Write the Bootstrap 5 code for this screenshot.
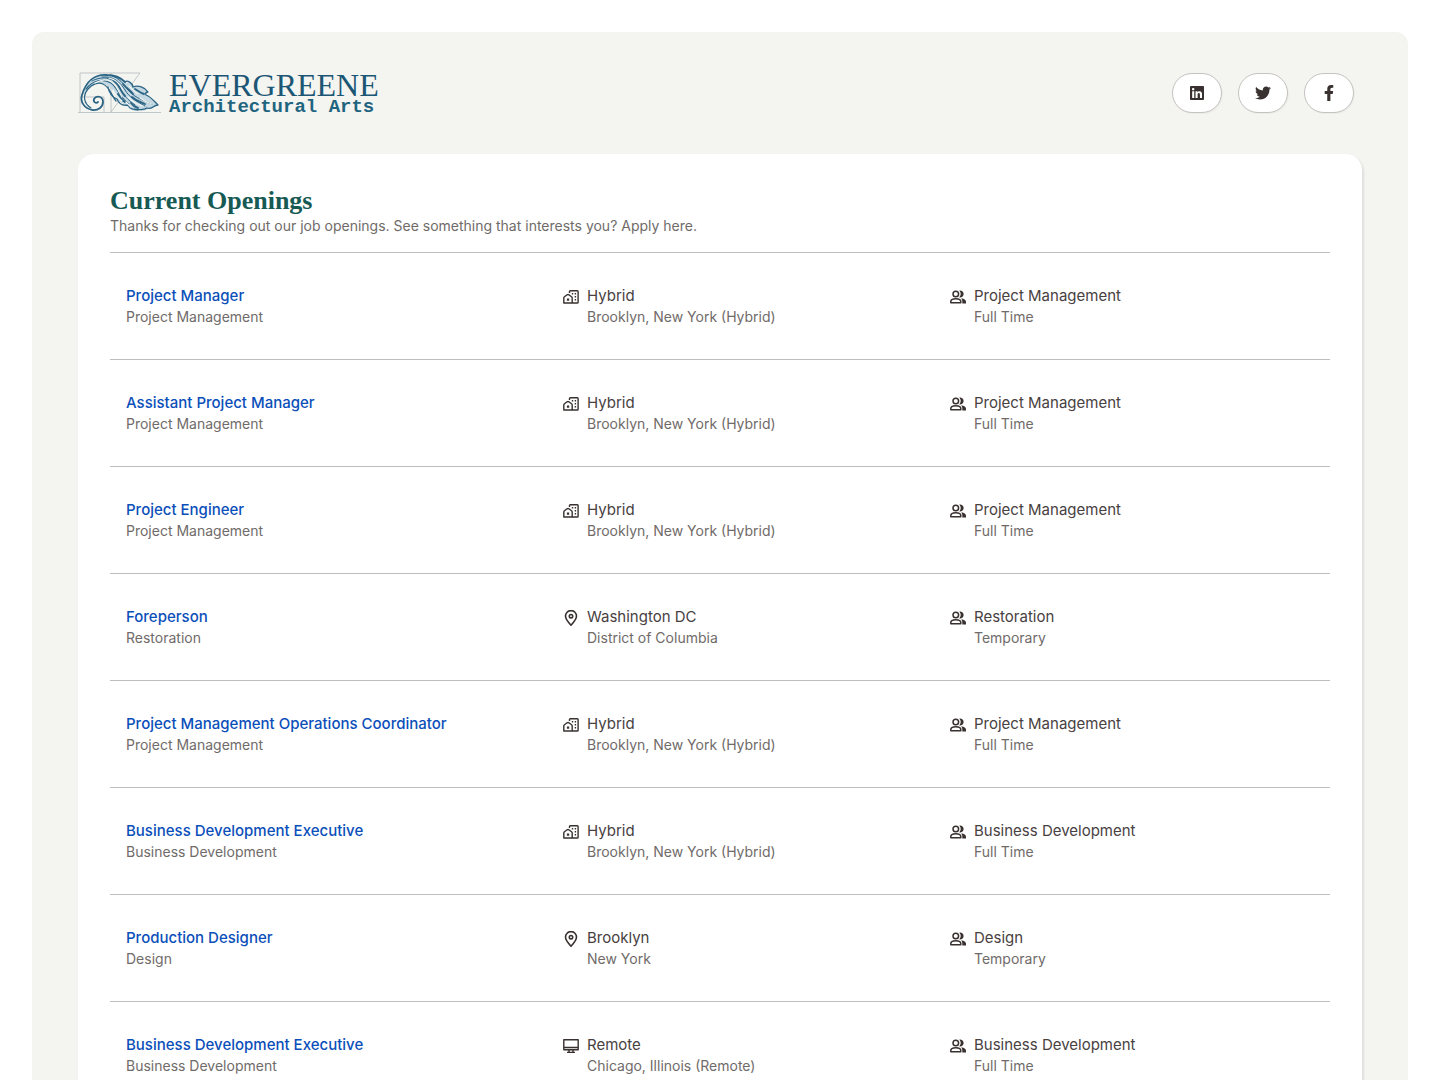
<!DOCTYPE html>
<html lang="en">
<head>
<meta charset="utf-8">
<meta name="viewport" content="width=device-width, initial-scale=1">
<title>Current Openings</title>
<link href="https://cdn.jsdelivr.net/npm/bootstrap@5.3.0/dist/css/bootstrap.min.css" rel="stylesheet">
<style>
body { font-family: Inter, sans-serif; font-size: 14px; line-height: 20px; color: #706b69; background: #fff; }
.shell { background: #f4f4f0; border-radius: 12px; padding: 40px 46px; margin: 32px; }
.brand { height: 42px; color: #1c5675; gap: 7px; }
.brand:hover { color: #1c5675; }
.brand-name { font: 32px/26px "Liberation Serif", serif; }
.brand-tag { font: bold 19px/18px "Liberation Mono", monospace; color: #1f6580; }
.social { width: 50px; height: 40px; background: #fff; border: 1px solid #c6c2bf; color: #38312f; box-shadow: 1px 1px 0 rgba(56,49,47,.04); }
.panel { background: #fff; border-radius: 16px; padding: 32px; margin-top: 40px; box-shadow: 2px 2px 2px rgba(56,49,47,.1); }
.panel-title { font: bold 26px/30px "Liberation Serif", serif; color: #165a53; }
.opening { display: grid; grid-template-columns: 437fr 387fr 364fr; padding: 32px 16px; border-top: 1px solid #c0bebc; }
.line-main { font-size: 15px; line-height: 22px; color: #48413f; }
a.line-main { color: #0b4fba; font-weight: 500; text-decoration: none; }
.glyph { width: 16px; height: 16px; margin: 4px 8px 0 0; flex: none; color: #38312f; }
</style>
<script src="https://cdn.jsdelivr.net/npm/bootstrap@5.3.0/dist/js/bootstrap.bundle.min.js"></script>
</head>
<body>
<svg class="d-none" aria-hidden="true">
  <symbol id="hybrid" viewBox="0 0 16 16"><path fill="none" stroke="currentColor" stroke-width="1.400" stroke-linejoin="round" d="M.8 14V9c0-.6.3-1 .7-1.300l2.600-1.900c.6-.4 1.200-.4 1.800 0l2.600 1.900c.4.3.7.7.7 1.300v5zM6.500 4V2.500c0-.5.3-.8.8-.8h7c.5 0 .8.3.8.8v10.700c0 .5-.3.8-.8.8H9.300"/><path fill="currentColor" d="M3.900 9.400h2.300v2.300H3.900zM8.800 4h1.400v1.500H8.800zM11.700 4h1.400v1.500h-1.400zM11.700 7h1.400v1.500h-1.400zM11.700 10h1.400v1.500h-1.400z"/></symbol>
  <symbol id="pin" viewBox="0 0 16 16"><g fill="none" stroke="currentColor" stroke-width="1.600"><path d="M8 15.200C5.200 12.300 2.500 9.400 2.500 6.100a5.500 5.500 0 0 1 11 0c0 3.300-2.700 6.200-5.500 9.100z"/><circle cx="8" cy="6.200" r="1.700"/></g></symbol>
  <symbol id="remote" viewBox="0 0 16 16"><path fill="none" stroke="currentColor" stroke-width="1.400" stroke-linejoin="round" d="M.8 1.800h14.400v10H.8zM.8 9.500h14.400M6 12v2.300M10 12v2.300M4 14.400h8"/></symbol>
  <symbol id="people" viewBox="0 0 16 16"><g fill="none" stroke="currentColor" stroke-width="1.500"><circle cx="5.800" cy="5" r="2.800"/><path stroke-linejoin="round" d="M.8 13.700v-1.200c0-2 2-2.800 5-2.800s5 .8 5 2.800v1.200z"/></g><path fill="currentColor" d="M9.300 1.600a3.500 3.500 0 1 1 0 6.800 5.200 5.200 0 0 0 0-6.800zM11.200 9.200c3 .3 4.800 1.500 4.800 3.600v1.700h-3.700v-2c0-1.400-.4-2.400-1.100-3.300z"/></symbol>
</svg>
<main class="shell">
  <header class="d-flex justify-content-between align-items-center">
    <a href="#" class="brand d-flex text-decoration-none">
      <svg width="84" height="42" viewBox="0 0 84 42" fill="none" aria-hidden="true">
        <path stroke="#a9b3b8" stroke-width=".7" d="M2 40V1h60L33 40M33 1v39M2 25h24v15M0 40.500h83"/>
        <path fill="#c3d8e2" d="M5 22C8 9 17 2 29 3c9 0 15 3 19 8 4-2 7 0 8 4 6-2 11 0 14 5l-2 3c4 2 8 6 12 10-5 1-4 5-10 4-5 3-9 1-13 1-4 1-7-2-9-5-6-2-10-7-12-13-4-5-8-9-15-8-7 0-11 4-14 9z"/>
        <g stroke="#2c6484" stroke-linecap="round" stroke-linejoin="round">
          <path stroke-width="1.800" d="M20 30c-2 2-5 0-4-3 2-4 9-3 9 3 0 5-5 9-11 8C6 36 2 30 4 23 8 9 17 2 29 3c8 0 14 3 18 7"/>
          <path stroke-width="1.200" d="M13 36C5 31 5 23 10 17c4-5 10-7 15-5 7 3 8 11 13 17M8 17c7-9 17-11 25-6 7 5 8 14 18 21"/>
          <path stroke-width="1" d="M14 9c11-6 23-3 28 7 3 7 8 12 15 17M24 5c12-1 18 5 23 13 4 7 11 11 20 16M34 4c7 2 12 8 16 14 5 6 13 10 24 14"/>
          <path stroke-width="1.300" d="M47 10c2-2 7 0 8 5 5-2 12 0 15 5-2 0-3 1-2 3 5 2 8 6 12 10-5 0-5 5-11 3-3 2-9 2-12 1M30 15c1 6 4 10 9 12 2 5 6 7 11 6 2 4 6 5 10 5"/>
          <path stroke-width="1.900" d="M36 9c6 4 6 10 11 15M45 12c3 4 7 6 10 10M40 22c3 3 3 7 7 8M54 25c4 4 9 5 13 7M57 17c3 2 6 4 9 5M53 31c2 3 4 4 7 5"/>
        </g>
        <path stroke="#f4f4f0" stroke-width="1.100" stroke-linecap="round" d="M17 11c7-4 14-4 19 1 3 3 5 8 8 13M31 6c7 1 11 6 14 12M51 14c3 2 5 6 9 8M35 18c2 4 5 8 9 11M50 25c5 5 9 8 15 9M62 26c4 3 8 5 12 6M48 30l5 5"/>
      </svg>
      <span class="d-flex flex-column">
        <span class="brand-name">EVERGREENE</span>
        <span class="brand-tag">Architectural Arts</span>
      </span>
    </a>
    <nav class="d-flex gap-3 me-2" aria-label="Social links">
      <a class="social rounded-pill d-flex align-items-center justify-content-center" href="#" aria-label="LinkedIn"><svg width="14" height="16" viewBox="0 0 448 512" fill="currentColor"><path d="M416 32H31.900C14.300 32 0 46.500 0 64.300v383.400C0 465.500 14.300 480 31.900 480H416c17.600 0 32-14.500 32-32.300V64.300c0-17.800-14.400-32.300-32-32.300zM135.400 416H69V202.200h66.500V416zm-33.200-243c-21.300 0-38.500-17.300-38.500-38.500S80.900 96 102.200 96c21.200 0 38.500 17.300 38.500 38.500 0 21.300-17.200 38.500-38.500 38.500zm282.100 243h-66.400V312c0-24.800-.5-56.700-34.500-56.700-34.600 0-39.900 27-39.900 54.900V416h-66.400V202.200h63.700v29.200h.9c8.900-16.800 30.600-34.500 62.900-34.500 67.200 0 79.700 44.300 79.700 101.900V416z"/></svg></a>
      <a class="social rounded-pill d-flex align-items-center justify-content-center" href="#" aria-label="Twitter"><svg width="16" height="16" viewBox="0 0 512 512" fill="currentColor"><path d="M459.370 151.716c.325 4.548.325 9.097.325 13.645 0 138.720-105.583 298.558-298.558 298.558-59.452 0-114.680-17.219-161.137-47.106 8.447.974 16.568 1.299 25.340 1.299 49.055 0 94.213-16.568 130.274-44.832-46.132-.975-84.792-31.188-98.112-72.772 6.498.974 12.995 1.624 19.818 1.624 9.421 0 18.843-1.300 27.614-3.573-48.081-9.747-84.143-51.980-84.143-102.985v-1.299c13.969 7.797 30.214 12.670 47.431 13.319-28.264-18.843-46.781-51.005-46.781-87.391 0-19.492 5.197-37.360 14.294-52.954 51.655 63.675 129.300 105.258 216.365 109.807-1.624-7.797-2.599-15.918-2.599-24.040 0-57.828 46.782-104.934 104.934-104.934 30.213 0 57.502 12.670 76.670 33.137 23.715-4.548 46.456-13.320 66.599-25.340-7.798 24.366-24.366 44.833-46.132 57.827 21.117-2.273 41.584-8.122 60.426-16.243-14.292 20.791-32.161 39.308-52.628 54.253z"/></svg></a>
      <a class="social rounded-pill d-flex align-items-center justify-content-center" href="#" aria-label="Facebook"><svg width="10" height="16" viewBox="0 0 320 512" fill="currentColor"><path d="M279.140 288l14.220-92.660h-88.910v-60.130c0-25.350 12.420-50.060 52.240-50.060h40.420V6.260S260.430 0 225.360 0c-73.220 0-121.080 44.380-121.080 124.720v70.620H22.890V288h81.390v224h100.170V288z"/></svg></a>
    </nav>
  </header>
  <section class="panel">
    <h1 class="panel-title mb-0">Current Openings</h1>
    <p class="mb-3">Thanks for checking out our job openings. See something that interests you? Apply here.</p>
    <div id="openings"></div>
  </section>
</main>
<script>
const openings = [
  ["Project Manager", "Project Management", "hybrid", "Hybrid", "Brooklyn, New York (Hybrid)", "Full Time"],
  ["Assistant Project Manager", "Project Management", "hybrid", "Hybrid", "Brooklyn, New York (Hybrid)", "Full Time"],
  ["Project Engineer", "Project Management", "hybrid", "Hybrid", "Brooklyn, New York (Hybrid)", "Full Time"],
  ["Foreperson", "Restoration", "pin", "Washington DC", "District of Columbia", "Temporary"],
  ["Project Management Operations Coordinator", "Project Management", "hybrid", "Hybrid", "Brooklyn, New York (Hybrid)", "Full Time"],
  ["Business Development Executive", "Business Development", "hybrid", "Hybrid", "Brooklyn, New York (Hybrid)", "Full Time"],
  ["Production Designer", "Design", "pin", "Brooklyn", "New York", "Temporary"],
  ["Business Development Executive", "Business Development", "remote", "Remote", "Chicago, Illinois (Remote)", "Full Time"]
];
const detail = (icon, main, sub) => `<div class="d-flex"><svg class="glyph" aria-hidden="true"><use href="#${icon}"/></svg><div><div class="line-main">${main}</div><div>${sub}</div></div></div>`;
document.getElementById("openings").innerHTML = openings.map(([title, dept, icon, place, address, type]) =>
  `<article class="opening"><div><a class="line-main d-block" href="#">${title}</a><div>${dept}</div></div>${detail(icon, place, address)}${detail("people", dept, type)}</article>`).join("");
</script>
</body>
</html>
